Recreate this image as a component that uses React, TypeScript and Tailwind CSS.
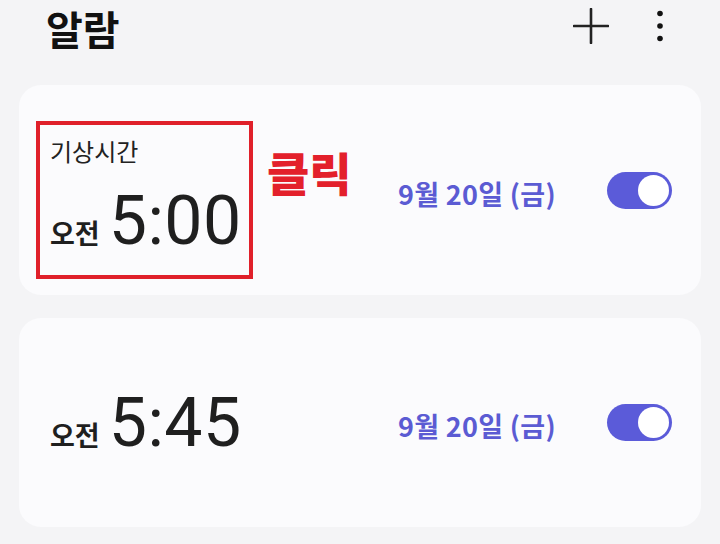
import React from "react";

const kr = { fontFamily: '"Noto Sans CJK KR", "Noto Sans", sans-serif' };
const num = { fontFamily: 'Roboto, "Noto Sans CJK KR", sans-serif' };

function Toggle() {
  return (
    <div className="w-[65px] h-[37px] rounded-full bg-[#5b5bd9] flex items-center justify-end pr-[3px]">
      <div className="w-[31px] h-[31px] rounded-full bg-white" />
    </div>
  );
}

function DateText() {
  return (
    <div className="text-[27px] font-bold text-[#5b5bd3] leading-none tracking-[0.3px]" style={kr}>
      9월 20일 (금)
    </div>
  );
}

function Time({ t }: { t: string }) {
  return (
    <div className="flex items-baseline gap-[9px] text-[#1f1f1f]">
      <span className="text-[27px] font-bold leading-none" style={kr}>오전</span>
      <span className="text-[68px] font-normal leading-none tracking-[0.5px]" style={num}>{t}</span>
    </div>
  );
}

export default function App() {
  return (
    <div className="w-[720px] h-[544px] bg-[#f4f4f6] overflow-hidden flex flex-col">
      <div className="h-[85px] flex items-start pl-[46px] pr-[56px] pt-[3px]">
        <div className="text-[40px] font-bold text-[#111] leading-tight" style={kr}>알람</div>
        <div className="ml-auto flex items-center gap-[47px] pt-[5px]">
          <svg width="36" height="36" viewBox="0 0 36 36">
            <path d="M18 1v34M1 18h34" stroke="#222" strokeWidth="2.6" strokeLinecap="round" />
          </svg>
          <svg width="8" height="32" viewBox="0 0 8 32">
            <circle cx="4" cy="3.5" r="2.8" fill="#111" />
            <circle cx="4" cy="16" r="2.8" fill="#111" />
            <circle cx="4" cy="28.5" r="2.8" fill="#111" />
          </svg>
        </div>
      </div>

      <div className="mx-[19px] flex flex-col gap-[23px]">
        <div className="h-[210px] rounded-[22px] bg-[#fbfbfd] flex items-center pl-[17px] pr-[29px]">
          <div className="mt-[20px] w-[217px] h-[158px] border-[4px] border-[#e0202a] pl-[10px] pt-[11px] flex flex-col">
            <div className="text-[24px] leading-tight text-[#222]" style={kr}>기상시간</div>
            <div className="mt-[21px]">
              <Time t="5:00" />
            </div>
          </div>
          <div className="ml-[14px] -mt-[38px] text-[46px] font-black text-[#e3202b] leading-none" style={kr}>
            클릭
          </div>
          <div className="ml-auto mt-[6px]">
            <DateText />
          </div>
          <div className="ml-[51px]">
            <Toggle />
          </div>
        </div>

        <div className="h-[209px] rounded-[22px] bg-[#fbfbfd] flex items-center pl-[31px] pr-[29px]">
          <Time t="5:45" />
          <div className="ml-auto mt-[6px]">
            <DateText />
          </div>
          <div className="ml-[51px]">
            <Toggle />
          </div>
        </div>
      </div>
    </div>
  );
}
